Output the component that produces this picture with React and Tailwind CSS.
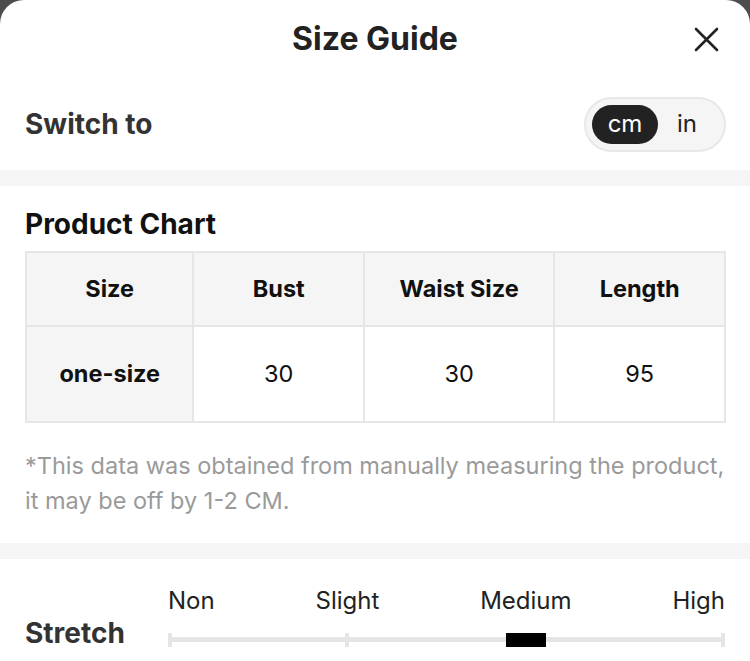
import React from "react";

export default function App() {
  const font = { fontFamily: "Inter, 'Noto Sans', sans-serif" };
  return (
    <div className="w-[750px] h-[661px] bg-[#4d4d4d] overflow-hidden" style={font}>
      <div className="bg-white rounded-t-[24px] h-full">
        {/* Header */}
        <div className="relative h-[78px] flex items-center justify-center">
          <h1 className="text-[32px] font-bold text-[#222] leading-none">Size Guide</h1>
          <button className="absolute left-[694px] top-[27px] w-[25px] h-[25px]">
            <svg viewBox="0 0 25 25" width="25" height="25" fill="none" stroke="#222" strokeWidth="2.6" strokeLinecap="round">
              <path d="M2 2 L23 23 M23 2 L2 23" />
            </svg>
          </button>
        </div>

        {/* Switch row */}
        <div className="h-[92px] flex items-center justify-between pl-[25px] pr-[24px]">
          <span className="text-[28px] font-bold text-[#333]">Switch to</span>
          <div className="w-[142px] h-[55px] rounded-full border-2 border-[#e8e8e8] bg-[#f5f5f5] flex items-center pl-[6px]">
            <div className="w-[66px] h-[39px] rounded-full bg-[#222] text-white text-[24px] flex items-center justify-center">cm</div>
            <div className="flex-1 text-center text-[24px] text-[#222] pr-[8px]">in</div>
          </div>
        </div>

        <div className="h-[16px] bg-[#f5f5f5]" />

        {/* Product chart */}
        <div className="px-[25px] pt-[22px] pb-[25px]">
          <h2 className="text-[28px] font-bold text-[#111] leading-[33px]">Product Chart</h2>
          <table className="mt-[10px] w-[701px] border-collapse text-[23.5px] text-[#111]">
            <thead>
              <tr className="h-[74px] bg-[#f5f5f5]">
                <th className="w-[168px] border-2 border-[#e6e6e6] font-bold">Size</th>
                <th className="w-[171px] border-2 border-[#e6e6e6] font-bold">Bust</th>
                <th className="w-[191px] border-2 border-[#e6e6e6] font-bold">Waist Size</th>
                <th className="w-[171px] border-2 border-[#e6e6e6] font-bold">Length</th>
              </tr>
            </thead>
            <tbody>
              <tr className="h-[96px]">
                <td className="border-2 border-[#e6e6e6] bg-[#f5f5f5] font-bold text-center">one-size</td>
                <td className="border-2 border-[#e6e6e6] text-center">30</td>
                <td className="border-2 border-[#e6e6e6] text-center">30</td>
                <td className="border-2 border-[#e6e6e6] text-center">95</td>
              </tr>
            </tbody>
          </table>
          <p className="mt-[25px] text-[23.5px] leading-[35px] text-[#9a9a9a] whitespace-nowrap">
            *This data was obtained from manually measuring the product,
            <br />
            it may be off by 1-2 CM.
          </p>
        </div>

        <div className="h-[16px] bg-[#f5f5f5]" />

        {/* Stretch */}
        <div className="flex items-end pl-[25px] pr-[25px] pt-[27px]">
          <span className="w-[143px] text-[28px] font-bold text-[#333] leading-[34px] mb-[3px]">Stretch</span>
          <div className="flex-1">
            <div className="flex justify-between text-[24px] leading-[30px] text-[#222]">
              <span>Non</span>
              <span>Slight</span>
              <span>Medium</span>
              <span>High</span>
            </div>
            <div className="mt-[17px] h-[20px]">
              <div className="relative h-[14px]">
                <div className="absolute left-0 right-0 top-[4px] h-[5px] bg-[#e5e5e5]" />
                <div className="absolute left-0 top-0 w-[4px] h-[14px] bg-[#e5e5e5]" />
                <div className="absolute left-[177px] top-0 w-[4px] h-[14px] bg-[#e5e5e5]" />
                <div className="absolute right-0 top-0 w-[4px] h-[14px] bg-[#e5e5e5]" />
                <div className="absolute left-[338px] top-0 w-[40px] h-[14px] bg-black" />
              </div>
            </div>
          </div>
        </div>
      </div>
    </div>
  );
}
